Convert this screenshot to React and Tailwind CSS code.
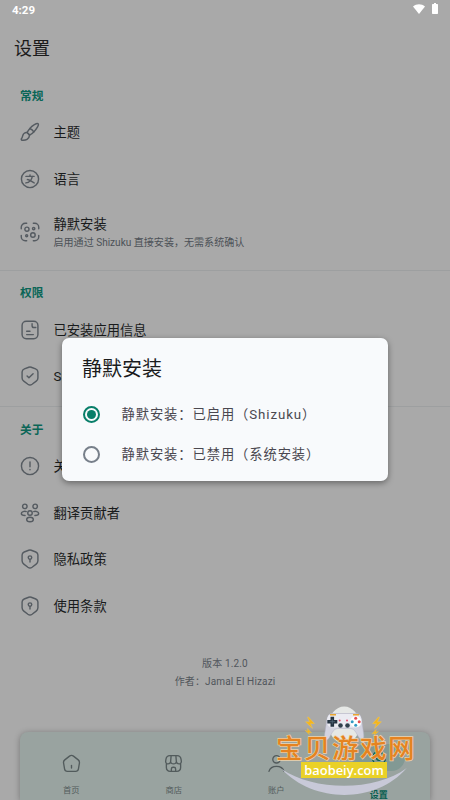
import clsx from "clsx";

const iconPaths = {
  brush: (
    <>
      <path d="M21.8 2.1c-1.5-1.3-7.3 2.4-9.9 5.6-1.7 2-2.9 3.8-3.5 5l3.1 3.1c1.200-.6 3.600-2.400 5.300-4.200 2.900-3.100 6.400-8.200 5-9.500Z" />
      <path d="M8.400 12.700c-2.300-.4-4.700 1.300-5.200 3.900-.3 1.500-.9 2.700-1.500 3.500-.4.600-.1 1.700.8 1.800 4.500.5 8.500-1.200 9-6.100M11.800 7.800c1.900.7 3.800 2.400 4.800 4.100M8.400 12.700c1.400.5 2.600 1.600 3.100 3.100" />
    </>
  ),
  language: (
    <>
      <circle cx="12" cy="12" r="10.300" />
      <path d="M7 8.800h10M12 7v1.800M14.800 8.800c-.8 4.200-3.900 7.400-7.800 7.900M8.800 12.700c2.600-.2 4.700 2.400 8.200 4" />
    </>
  ),
  scan: (
    <>
      <path d="M1.500 8V6.300A4.800 4.800 0 0 1 6.300 1.500H8M16 1.500h1.700a4.800 4.800 0 0 1 4.800 4.800V8M22.500 16v1.700a4.800 4.800 0 0 1-4.800 4.800H16M8 22.500H6.300a4.800 4.800 0 0 1-4.800-4.800V16" />
      <circle cx="8.300" cy="8.600" r="2.500" />
      <circle cx="16.400" cy="7.800" r="1.400" />
      <circle cx="15.500" cy="15.500" r="2.700" />
      <circle cx="8" cy="16.500" r="1.200" />
    </>
  ),
  document: (
    <>
      <rect x="2.500" y="1.500" width="19" height="21" rx="5" />
      <path d="M14.500 4.500v2.300c0 1.300.9 2.200 2.200 2.200H19M8 13.500h4M8 17.500h8" />
    </>
  ),
  shieldCheck: (
    <>
      <path d="M10.500 1.500 5.300 3.500C3.800 4.100 2.500 5.500 2.500 7.300v7.200c0 1.500.8 2.900 2 3.700l5 3.700c1.600 1.100 3.400 1.100 5 0l5-3.700c1.200-.8 2-2.200 2-3.700V7.300c0-1.700-1.300-3.200-2.800-3.800l-5.200-2c-.9-.3-2.100-.3-3 0Z" />
      <path d="m8.500 12 2.200 2.200 5-5" />
    </>
  ),
  shieldLock: (
    <>
      <path d="M10.500 1.500 5 3.600C3.500 4.200 2.500 5.500 2.500 7.100v7.100c0 1.500.9 3 2.100 3.900l4.900 3.800c1.600 1.100 3.400 1.100 5 0l4.900-3.800c1.200-.9 2.100-2.400 2.100-3.900V7.100c0-1.600-1-2.900-2.500-3.500l-5.500-2.100c-.9-.3-2.100-.3-3 0Z" />
      <circle cx="12" cy="10.300" r="2.100" />
      <path d="M12 12.600v3" />
    </>
  ),
  info: (
    <>
      <circle cx="12" cy="12" r="10.300" />
      <path d="M12 7v6M12 16v.4" />
    </>
  ),
  people: (
    <>
      <circle cx="5.800" cy="4" r="2.700" />
      <circle cx="18.200" cy="4" r="2.700" />
      <circle cx="12" cy="12" r="2.700" />
      <ellipse cx="12" cy="19.800" rx="4" ry="2.700" />
      <path d="M7.500 10.300c-2-.8-5.900.1-5.900 2.300 0 1.700 2 2.400 4.500 2.400M16.500 10.300c2-.8 5.900.1 5.900 2.300 0 1.700-2 2.400-4.500 2.400" />
    </>
  ),
  home: (
    <>
      <path d="m9.500 2.700-6 4.700C2.400 8.300 1.700 10 2 11.400l1.300 7.800c.3 1.700 1.700 2.800 3.400 2.800h10.600c1.600 0 3.100-1.200 3.400-2.800L22 11.400c.2-1.400-.4-3.100-1.500-4l-6-4.700c-1.500-1.200-3.500-1.200-5 0Z" />
      <path d="M12 14.500v3.200" />
    </>
  ),
  shop: (
    <>
      <path d="M3 11.800v5.400C3 20.600 4.800 22 8 22h8c3.200 0 5-1.400 5-4.800v-5.400M7.500 2h9c3.500 0 4.700 1.200 5.100 5l.3 2.200c.2 1.700-1 3.300-2.900 3.300-1.800 0-3.200-1.200-3.400-3L15 2M9 2l-.6 7.500c-.2 1.800-1.600 3-3.400 3-1.900 0-3.100-1.600-2.900-3.300L2.400 7c.4-3.800 1.600-5 5.100-5M8.400 9.500c-.1 1.700 1.600 3 3.600 3s3.700-1.300 3.600-3M9.300 22v-3c0-1.400.8-2.300 2.200-2.300h1c1.400 0 2.200.9 2.200 2.300v3" />
    </>
  ),
  user: (
    <>
      <circle cx="12" cy="6.700" r="4.700" />
      <path d="M2.500 22c1.200-4 5-6.300 9.500-6.300s8.300 2.300 9.500 6.300" />
    </>
  ),
  settings: (
    <>
      <circle cx="12" cy="12" r="3.200" />
      <path d="m9.500 3.200-1 2.400-2.600-.3-2.300 4 1.600 2.700-1.600 2.700 2.300 4 2.600-.3 1 2.400h5l1-2.400 2.600.3 2.300-4-1.600-2.700 1.600-2.700-2.300-4-2.600.3-1-2.400h-5Z" />
    </>
  ),
};

const sections = [
  {
    title: "常规",
    items: [
      { icon: "brush", label: "主题" },
      { icon: "language", label: "语言" },
      { icon: "scan", label: "静默安装", hint: "启用通过 Shizuku 直接安装，无需系统确认" },
    ],
  },
  {
    title: "权限",
    items: [
      { icon: "document", label: "已安装应用信息" },
      { icon: "shieldCheck", label: "Shizuku" },
    ],
  },
  {
    title: "关于",
    items: [
      { icon: "info", label: "关于" },
      { icon: "people", label: "翻译贡献者" },
      { icon: "shieldLock", label: "隐私政策" },
      { icon: "shieldLock", label: "使用条款" },
    ],
  },
];

const tabs = [
  { icon: "home", label: "首页" },
  { icon: "shop", label: "商店" },
  { icon: "user", label: "账户" },
  { icon: "settings", label: "设置", active: true },
];

const options = ["静默安装：已启用（Shizuku）", "静默安装：已禁用（系统安装）"];

function Icon({ name, className }) {
  return (
    <svg
      viewBox="0 0 24 24"
      className={clsx("shrink-0", className)}
      fill="none"
      stroke="currentColor"
      strokeWidth="1.7"
      strokeLinecap="round"
      strokeLinejoin="round"
    >
      {iconPaths[name]}
    </svg>
  );
}

function StatusBar() {
  return (
    <div className="flex h-5 items-center justify-between pr-3 pl-[12px] text-white">
      <span className="text-[11.500px] leading-5 font-bold">4:29</span>
      <div className="-mt-[3px] flex items-center gap-[7px]">
        <svg className="h-[10px] w-[12px]" viewBox="0 0 12 10" fill="currentColor">
          <path d="M0 2.500C3.500-.6 8.500-.6 12 2.500L6 10Z" />
        </svg>
        <svg className="h-[11px] w-[6px]" viewBox="0 0 6 11" fill="currentColor">
          <path d="M2 0h2v1h1.300q.7 0 .7.700v8.600q0 .7-.7.700H.7Q0 11 0 10.300V1.700Q0 1 .7 1H2Z" />
        </svg>
      </div>
    </div>
  );
}

function SettingRow({ icon, label, hint }) {
  return (
    <div className={clsx("flex items-center gap-[13.500px] pl-5", hint ? "h-[59.300px]" : "h-[46.700px]")}>
      <Icon name={icon} className="size-5 text-[#555b61]" />
      <div className={hint ? "pt-[2px]" : "pt-[1px]"}>
        <div className="text-[13.300px] leading-[19px] text-[#191b1c]">{label}</div>
        {hint && <div className="text-[10.050px] leading-[17px] text-[#4c5157]">{hint}</div>}
      </div>
    </div>
  );
}

function BottomNav() {
  return (
    <nav className="absolute top-[732px] right-5 left-5 grid h-[68px] grid-cols-4 rounded-t-[8px] bg-[#99a3a0] shadow-[0_1px_6px_rgba(0,0,0,0.3)]">
      {tabs.map((tab) => (
        <div
          key={tab.label}
          className={clsx("flex flex-col items-center", tab.active ? "pt-[12px] text-[#075e50]" : "pt-[22px] text-[#525b5c]")}
        >
          {tab.active ? (
            <span className="flex h-[27px] w-[53px] items-center justify-center rounded-full bg-[#829994]">
              <Icon name={tab.icon} className="size-[18px]" />
            </span>
          ) : (
            <Icon name={tab.icon} className="size-[19px]" />
          )}
          <span className={clsx("leading-3", tab.active ? "mt-[18px] text-[9px] font-bold" : "mt-[11px] text-[8.300px]")}>
            {tab.label}
          </span>
        </div>
      ))}
    </nav>
  );
}

function SilentInstallDialog() {
  return (
    <div className="absolute top-[338px] left-[62px] h-[143px] w-[326px] rounded-[7px] bg-[#f8fafc] pt-[17px] pl-5 shadow-[0_2px_6px_rgba(0,0,0,0.4)]">
      <h2 className="text-[20px] leading-[29px] text-[#1b1c1d]">静默安装</h2>
      <div className="mt-[10px]">
        {options.map((option, i) => (
          <div key={option} className="flex h-10 items-center gap-[21.500px]">
            <span
              className={clsx(
                "ml-[1px] flex size-[17px] items-center justify-center rounded-full border-2",
                i === 0 ? "border-[#087e69]" : "border-[#777f8a]"
              )}
            >
              {i === 0 && <span className="size-[9px] rounded-full bg-[#087e69]" />}
            </span>
            <span className="pt-[2px] text-[13.300px] tracking-[0.900px] text-[#4a4850]">{option}</span>
          </div>
        ))}
      </div>
    </div>
  );
}

function Bolt({ transform }) {
  return <path transform={transform} d="M6 0 0 7h4L2 12l7-7H5l2-5Z" />;
}

function SiteBadge() {
  return (
    <div className="absolute top-[700px] left-[270px] h-[100px] w-[150px]">
      <svg className="absolute inset-0" width="150" height="100" viewBox="0 0 150 100">
        <path d="M11.700 69C44 103.700 106 103.700 136.700 68 106 91.500 44 91.500 11.700 69Z" fill="#c8c9d8" />
        <ellipse cx="74.200" cy="25" rx="15.500" ry="18.500" fill="#e6e8e6" />
        <path
          d="M62 13.500h24.500c3 0 4.500 2.500 5.200 6.500l2 14c.5 5-.7 7-3.200 5.200-2.300-1.700-3.500-6-6-8.700-1.300-1.500-3-2-5-2h-10.500c-2.500 0-4 .5-5.300 2-2.500 2.700-3.700 7.300-6 9-2.300 1.500-3.600-.5-3-5.500l2.100-14c.7-4 2.200-6.500 5.200-6.500Z"
          fill="#d3d3e0"
          stroke="#b0b0c2"
          strokeWidth=".5"
        />
        <path d="M62 14h24.500c3 0 4.500 2 5 5.500.7 5-1.500 8-5.500 8H62.500c-4 0-6.200-3-5.500-8 .5-3.500 2-5.500 5-5.500Z" fill="#ebebf2" />
        <path d="M60 14.700h6M83 14.700h6" stroke="#eaa62f" strokeWidth="1.500" />
        <path d="M62.300 16.700v10M57.300 21.700h10" stroke="#253341" strokeWidth="3.600" />
        <path d="M62.300 19v5.400M59.600 21.700H65" stroke="#506777" strokeWidth=".8" />
        <circle cx="85.700" cy="21.700" r="5.500" fill="#fff" />
        <circle cx="85.700" cy="18.200" r="1.500" fill="#e74c50" />
        <circle cx="89.200" cy="21.700" r="1.500" fill="#e74c50" />
        <circle cx="85.700" cy="25.200" r="1.500" fill="#329bc4" />
        <circle cx="82.200" cy="21.700" r="1.500" fill="#329bc4" />
        <circle cx="69.700" cy="20.500" r="1" fill="#e74c6c" />
        <circle cx="77" cy="20.500" r="1" fill="#e74c6c" />
        <circle cx="70.500" cy="25.500" r="2.300" fill="#31404c" />
        <circle cx="77.500" cy="25.500" r="2.300" fill="#31404c" />
        <g fill="#f5b51b" stroke="#f2cc5e" strokeWidth=".4">
          <Bolt transform="translate(44.500 17) scale(-1 .950)" />
          <Bolt transform="translate(102.500 17) scale(1 .950)" />
          <Bolt transform="translate(42.500 30) rotate(15) scale(-.8 .450)" />
          <Bolt transform="translate(101 31) rotate(-15) scale(.8 .450)" />
        </g>
      </svg>
      <span className="absolute top-[31px] left-[6px] text-[26.500px] leading-[36px] font-medium tracking-[1.500px] whitespace-nowrap text-[#e58320] [-webkit-text-stroke:1.300px_#edd3ae] [paint-order:stroke_fill]">
        宝贝游戏网
      </span>
      <span className="absolute top-[62px] left-[31px] flex h-[16px] w-[86px] items-center justify-center bg-[#ead127] pb-px font-['Open_Sans'] text-[12.900px] leading-[16px] font-semibold text-white">
        baobeiy.com
      </span>
    </div>
  );
}

export default function App() {
  return (
    <div className="relative h-[800px] w-[450px] overflow-hidden bg-[#a9a9a9] font-[Roboto,'Noto_Sans_CJK_SC',sans-serif]" lang="zh-CN">
      <StatusBar />
      <h1 className="mt-[16px] pl-[14px] text-[18px] leading-[26px] text-[#1b1b1b]">设置</h1>
      <main className="mt-[18.500px]">
        {sections.map((section, i) => (
          <section
            key={section.title}
            className={clsx(i > 0 && "border-t border-[#9d9fa0] pt-[7px]", i === 0 && "pb-[8px]", i === 1 && "pb-[6.500px]")}
          >
            <h2 className="pt-[2.500px] pl-5 text-[11.700px] leading-[26px] font-bold text-[#0b6657]">{section.title}</h2>
            {section.items.map((item) => (
              <SettingRow key={item.label} {...item} />
            ))}
          </section>
        ))}
      </main>
      <footer className="mt-[26px] text-center text-[10px] leading-[17.500px] tracking-[0.150px] text-[#51565c]">
        <p>版本 1.2.0</p>
        <p>作者：Jamal El Hizazi</p>
      </footer>
      <BottomNav />
      <SilentInstallDialog />
      <SiteBadge />
    </div>
  );
}
